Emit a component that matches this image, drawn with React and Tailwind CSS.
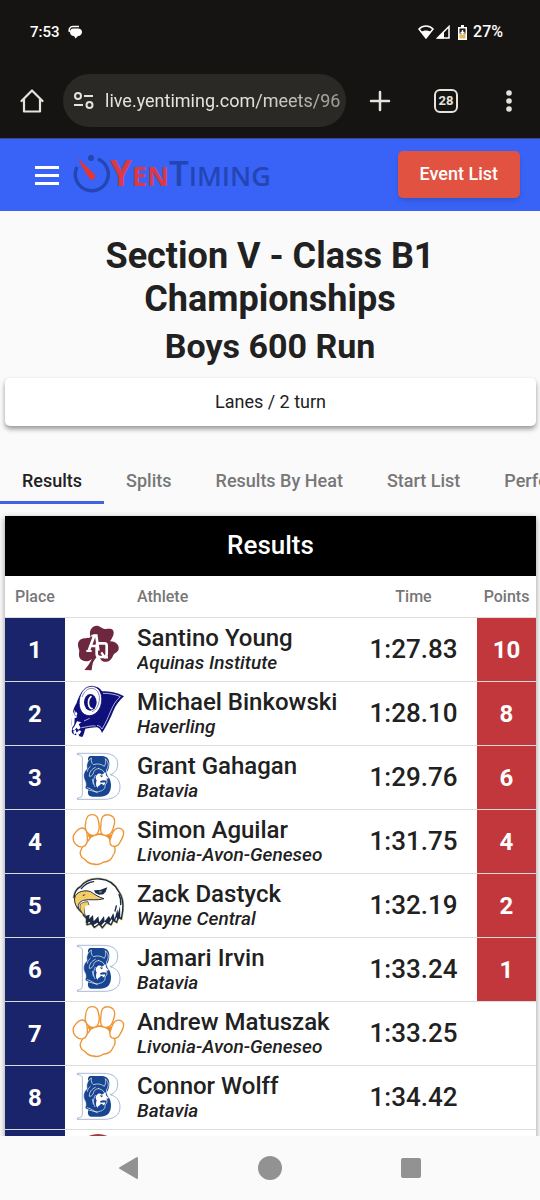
import React from "react";
import clsx from "clsx";

const tabs = ["Results", "Splits", "Results By Heat", "Start List", "Performance List"];

const results = [
  { place: 1, name: "Santino Young", school: "Aquinas Institute", time: "1:27.83", points: 10, logo: ShamrockLogo },
  { place: 2, name: "Michael Binkowski", school: "Haverling", time: "1:28.10", points: 8, logo: RamLogo },
  { place: 3, name: "Grant Gahagan", school: "Batavia", time: "1:29.76", points: 6, logo: DevilLogo },
  { place: 4, name: "Simon Aguilar", school: "Livonia-Avon-Geneseo", time: "1:31.75", points: 4, logo: PawLogo },
  { place: 5, name: "Zack Dastyck", school: "Wayne Central", time: "1:32.19", points: 2, logo: EagleLogo },
  { place: 6, name: "Jamari Irvin", school: "Batavia", time: "1:33.24", points: 1, logo: DevilLogo },
  { place: 7, name: "Andrew Matuszak", school: "Livonia-Avon-Geneseo", time: "1:33.25", logo: PawLogo },
  { place: 8, name: "Connor Wolff", school: "Batavia", time: "1:34.42", logo: DevilLogo },
  { place: 9, logo: CircleLogo },
];

function Logo({ viewBox, children }) {
  return (
    <svg viewBox={viewBox} className="mx-auto block size-14 overflow-visible" aria-hidden="true">
      {children}
    </svg>
  );
}

function ShamrockLogo() {
  return (
    <Logo viewBox="28 19 168 168">
      <path
        fill="#6d2840"
        d="M90 64C83 46 93 31 108 30c10 0 15 8 24 10 11 1 22-4 26 6 4 10-4 22-10 31 14-1 28 9 26 23-1 10-13 11-17 20-4 13-15 20-27 18-12-3-13-15-16-20-9 9-16 18-18 26-2 9-3 18-3 20l-22-1c9-9 16-21 23-33-8 6-19 10-29 4-13-7-10-20-9-29-3-10-8-22 1-31 9-10 27-4 33-10z"
      />
      <g fill="none" stroke="#fff" strokeWidth="8">
        <path d="M84 105l17-45h6l6 45M90 91h21" />
        <path d="M77 106h16M92 60h15" strokeWidth="6" />
        <path d="M113 83h19c4 0 6 3 6 7v24c0 6-4 10-10 10h-11c-6 0-9-4-9-10V92c0-5 2-9 5-9z" />
        <path d="M122 110l10 15h10" strokeWidth="7" />
      </g>
    </Logo>
  );
}

function RamLogo() {
  return (
    <Logo viewBox="0 7 168 168">
      <path
        fill="#10107c"
        d="M72 10c8-3 18 3 24 13 22 0 46 3 66 15-14 13-25 27-32 44-8 20-19 43-34 66-3-8-6-14-14-17-12-1-24 3-36 4-3 8-4 17-9 25l-9-2-3-8-8 5c-7-2-12-6-12-12 2-8 2-14 0-20-1-12 1-22 4-31-1-14 5-24 11-34 5-15 12-33 25-42z"
      />
      <path fill="none" stroke="#fff" strokeWidth="2" d="M99 29c18 0 36 2 52 10-27 22-31 59-55 97-3-6-8-10-15-11" />
      <path
        fill="#fff"
        stroke="#10107c"
        strokeWidth="2.500"
        d="M28 50C31 22 48 7 67 8c20 2 30 21 28 44-2 25-17 43-37 44-22 0-33-21-30-46z"
      />
      <path fill="none" stroke="#10107c" strokeWidth="1.500" d="M36 40c6-17 17-26 30-26 15 1 24 17 22 35-2 17-10 31-22 35" />
      <ellipse cx="61" cy="56" rx="19" ry="25" fill="#10107c" />
      <path fill="none" stroke="#fff" strokeWidth="5" strokeLinecap="round" d="M66 75c-12-3-15-26-3-36" />
      <path fill="none" stroke="#10107c" strokeWidth="2" d="M30 88c17 22 48 19 59-11" />
      <path fill="#fff" d="M6 97l9-20-2 17 9 6-8 4-1 18-6 10c-3-12-3-24-1-35zM21 113l13 3-8 6 6 11-8 5-4-6-8 9-5-4 7-10zM17 83l5 6-2 8-6-4z" />
      <path fill="#fff" d="M10 143l7-5 3 9 7-7 7 2-5 10-3-2-4 8-5-9-5 4z" />
      <path fill="none" stroke="#fff" strokeWidth="2" d="M34 132c16-2 30-7 43-5M42 112l17-8" />
    </Logo>
  );
}

function DevilLogo() {
  return (
    <Logo viewBox="0 4 168 168">
      <path
        fill="#fff"
        stroke="#7d95bf"
        strokeWidth="2"
        d="M22 14h77c29 0 44 12 44 32 0 18-9 28-23 32 19 4 30 18 30 36 0 25-18 38-48 38H22v-4c10-1 15-3 15-11V29c0-7-4-10-15-11z"
      />
      <path fill="#184592" d="M62 22h30c18 0 26 7 26 24 0 15-6 25-14 30 12 5 19 17 19 34 0 22-10 34-33 34H67c-10 0-14-6-13-15V33c0-7 2-11 8-11z" />
      <path
        fill="#184592"
        stroke="#fff"
        strokeWidth="2"
        strokeLinejoin="round"
        d="M51 60c-4-17 5-26 13-32-1 10 1 16 6 20 13-4 24-2 33 5 4-7 5-14 3-23 11 10 11 23 3 34 1 9 3 16 8 23l-8 3c4 9 1 14-4 19 2 9-5 16-13 18-9 4-19 3-27-1-8 0-15-4-20-8 3-7 4-14 0-21-7-13-5-28 6-37z"
      />
      <path fill="#fff" d="M84 76c4-3 9 0 11 2l12-7 1 9 7 8-7 2 2 6-12-1-8 3 2 4 14-1c-1 8-5 10-10 8-9-2-12 5-14 8-6-7-4-15-2-22-5-7-3-15 4-19z" />
      <path fill="#184592" d="M89 80l11 1-6 5zM94 97l15-1-6 5zM90 105l9 2-4 9z" />
      <g fill="none" stroke="#fff" strokeWidth="2" strokeLinecap="round">
        <path d="M61 53c-5 4-8 9-9 15M76 56c-11 5-19 15-18 27 8 1 12-7 14-15 3-5 8-8 13-8M85 59l13 6 6 8M76 80c-8 13-7 24-1 34M67 92l3 14M52 117c13 3 19 11 30 15" />
      </g>
    </Logo>
  );
}

function PawLogo() {
  return (
    <Logo viewBox="28 205 168 168">
      <g fill="#fff" stroke="#ee9433" strokeWidth="4" strokeLinejoin="round">
        <path fill="#ee9433" d="M82 268l32-3 39 4-10 14-26-16-25 16z" />
        <path d="M90 275c12-10 38-14 52-1 8 8 8 18 16 25 8 10 6 21-1 30-4 13-16 21-28 20-9 7-20 9-31 6-12 0-20-7-27-15-12-5-16-19-9-29 4-14 18-19 28-36z" />
        <path d="M82 211c13-8 27-4 30 9 4 14 5 32-1 42-5 10-18 9-27 2-11-8-12-20-9-32 0-9 3-15 7-21z" />
        <path d="M126 213c7-8 20-7 29-1 9 7 8 20 4 31-2 10-6 20-14 24-8 4-19 3-23-5-5-9-1-20-1-29 0-8 1-14 5-20z" />
        <path d="M64 247c13-1 16 16 16 30 1 13-3 23-13 26-10 3-20-4-26-12-6-11-4-22 3-30 5-7 11-13 20-14z" />
        <path d="M169 248c10-3 20 4 20 15-1 11-6 17-10 25-5 12-16 17-26 12-8-5-5-19-1-28 3-11 7-21 17-24z" />
      </g>
    </Logo>
  );
}

function EagleLogo() {
  return (
    <Logo viewBox="0 10 168 168">
      <path
        fill="#fff"
        stroke="#c9bd7c"
        strokeWidth="8"
        strokeLinejoin="round"
        d="M12 68C14 50 24 40 32 36c14-18 35-25 58-23 28 2 45 16 56 38 13 17 14 36 12 56l-4 26-9-8-5 18-10-8-7 15-13-7-13 16-9-12-15 11-8-12-14 4 2-16-12-12c-4-10-2-20 3-27-9 5-7 12-6 20-14-10-22-28-22-47z"
      />
      <path
        fill="#fff"
        stroke="#1c2a44"
        strokeWidth="4"
        strokeLinejoin="round"
        d="M12 68C14 50 24 40 32 36c14-18 35-25 58-23 28 2 45 16 56 38 13 17 14 36 12 56l-4 26-9-8-5 18-10-8-7 15-13-7-13 16-9-12-15 11-8-12-14 4 2-16-12-12c-4-10-2-20 3-27-9 5-7 12-6 20-14-10-22-28-22-47z"
      />
      <path
        fill="#f5cf65"
        stroke="#1c2a44"
        strokeWidth="3"
        strokeLinejoin="round"
        d="M62 51c-14-5-32-2-42 7-10 10-8 29 4 44 0-14 5-22 17-25 18-5 38 2 61-5-15-4-28-12-40-21z"
      />
      <path fill="#f5cf65" stroke="#1c2a44" strokeWidth="2" strokeLinejoin="round" d="M31 88c7-5 15-7 23-7l3 12c-8-1-13 4-13 14-1 6 0 11 3 16-13-7-20-20-16-35z" />
      <path fill="#fff" d="M46 94c4-3 9-4 12-3-2 9-1 19-8 28-5-7-8-17-4-25z" />
      <path fill="#1c2a44" d="M72 47l18-1 22-8-5 13-7 8-13 1-11-5zM37 61l10-2-6 5z" />
      <path fill="#5c86bf" d="M86 50l10-2-2 6-6 1z" />
      <path
        fill="#1c2a44"
        d="M48 123l11-3-2 13 12-12 2 19 14-15 3 18 14-19 2 16 13-17 4 9 9-17 4 18 8-29 2 12 6-22 1 36-7 5-5-7-5 14-10-8-7 13-13-6-13 14-9-11-15 9-8-11-12 4z"
      />
      <path fill="none" stroke="#1c2a44" strokeWidth="4" strokeLinecap="round" d="M34 42c9-12 22-19 37-21M147 60c5 9 6 20 5 30M139 94l-4 15" />
    </Logo>
  );
}

function CircleLogo() {
  return (
    <Logo viewBox="0 0 56 56">
      <circle cx="28" cy="23" r="23" fill="#a13940" />
      <circle cx="28" cy="23" r="16" fill="#fff" />
    </Logo>
  );
}

function StatusBar() {
  return (
    <div className="flex h-16 items-center justify-between pl-[30px] pr-[37px] text-[15px] font-medium text-white">
      <div className="flex items-center gap-2">
        <span>7:53</span>
        <svg viewBox="0 0 15 14" className="h-[14px] w-[15px]" fill="currentColor" aria-hidden="true">
          <path d="M5.500 3.500h4.500c2.500 0 4 1.500 4 3.500s-1.500 4-4 4L7.500 13.500 6 11C3.500 11 2 9.500 2 7s1.500-3.500 3.500-3.500z" />
          <path d="M1.500 7C.5 4 2 1.500 5 1.500h6" fill="none" stroke="currentColor" strokeWidth="1.500" />
        </svg>
      </div>
      <div className="flex items-center">
        <svg viewBox="0 0 16 14" className="h-[14px] w-4" aria-hidden="true">
          <path d="M1 4c4-4 10-4 14 0L8 13z" fill="none" stroke="#fff" strokeWidth="1.500" />
          <path d="M3 7c3-2 7-2 10 0l-5 6z" fill="#fff" />
        </svg>
        <svg viewBox="0 0 14 14" className="ml-0.5 h-[14px] w-[14px]" aria-hidden="true">
          <path d="M1.500 13L13 1.500V13z" fill="none" stroke="#fff" strokeWidth="1.500" />
          <path d="M1 13.500l7-7v7z" fill="#fff" />
        </svg>
        <svg viewBox="0 0 9 15" className="ml-2 h-[15px] w-[9px]" aria-hidden="true">
          <path d="M3 0h3v2h3v13H0V2h3z" fill="#fff" />
          <path d="M1.500 3.500h6v5h-6z" fill="#151412" />
          <path d="M1.500 9h6v4.500h-6z" fill="#e0bd5c" />
          <path d="M4.500 5v5M2.500 7.500h4" stroke="#fff" strokeWidth="1.400" />
        </svg>
        <span className="ml-1.5 text-base">27%</span>
      </div>
    </div>
  );
}

function BrowserBar() {
  return (
    <div className="flex h-[74px] items-center pb-px pl-5 pr-7 text-[#e6e2dc]">
      <button aria-label="Home" className="shrink-0">
        <svg viewBox="0 0 24 24" className="size-6" fill="none" stroke="currentColor" strokeWidth="2.200" strokeLinejoin="round" strokeLinecap="round" aria-hidden="true">
          <path d="M1.500 12L12 1.500 22.500 12M4 10v12.500h16V10" />
        </svg>
      </button>
      <div className="ml-[19px] flex h-[53px] min-w-0 flex-1 items-center gap-[11px] rounded-full bg-[#2a2926] pl-2.5 pr-1.5">
        <svg viewBox="0 0 21 18" className="h-[18px] w-[21px] shrink-0" fill="none" stroke="currentColor" strokeWidth="2" aria-hidden="true">
          <circle cx="5" cy="4" r="3" />
          <circle cx="16.500" cy="13" r="3" />
          <path d="M11 4h9M1 13h9" />
        </svg>
        <input
          aria-label="Address"
          className="w-full min-w-0 bg-transparent text-lg outline-none [mask-image:linear-gradient(to_right,black_60%,rgba(0,0,0,0.6))]"
          defaultValue="live.yentiming.com/meets/96"
        />
      </div>
      <button aria-label="New tab" className="ml-[23px] shrink-0">
        <svg viewBox="0 0 22 22" className="size-[22px]" fill="none" stroke="currentColor" strokeWidth="2.500" strokeLinecap="round" aria-hidden="true">
          <path d="M11 2v18M2 11h18" />
        </svg>
      </button>
      <button
        aria-label="28 open tabs"
        className="ml-[43px] flex size-6 shrink-0 items-center justify-center rounded-md border-2 border-current text-[13px] font-bold leading-none"
      >
        28
      </button>
      <button aria-label="Menu" className="ml-12 shrink-0">
        <svg viewBox="0 0 6 22" className="h-[22px] w-1.5" fill="currentColor" aria-hidden="true">
          <circle cx="3" cy="3" r="2.800" />
          <circle cx="3" cy="11" r="2.800" />
          <circle cx="3" cy="19" r="2.800" />
        </svg>
      </button>
    </div>
  );
}

function AppHeader() {
  return (
    <header className="flex h-[73px] shrink-0 items-center border-t border-[#3b4a86] bg-[#3863f6] pb-0.5 pl-[35px] pr-5">
      <button aria-label="Open menu" className="mt-0.5 flex w-6 flex-col gap-[5px]">
        <span className="h-[3px] w-full bg-white" />
        <span className="h-[3px] w-full bg-white" />
        <span className="h-[3px] w-full bg-white" />
      </button>
      <a href="#" className="ml-3.5 flex items-center">
        <svg viewBox="0 0 37 40" className="h-10 w-[37px]" aria-hidden="true">
          <path d="M4 13a16.500 16.500 0 1 0 21-8" fill="none" stroke="#2446b4" strokeWidth="3.500" />
          <circle cx="18" cy="4" r="3" fill="#2446b4" />
          <path d="M5 4l17 17c1 3-2 6-5 4C12 19 9 12 5 4z" fill="#e8352e" />
        </svg>
        <span className="pb-1 font-['Open_Sans',sans-serif] text-[27px] font-bold leading-none text-[#d93a45]">
          <span className="text-[35px]">Y</span>EN
        </span>
        <span className="pb-1 font-['Open_Sans',sans-serif] text-[27px] font-semibold leading-none text-[#2446b4]">
          <span className="text-[35px]">T</span>IMING
        </span>
      </a>
      <a
        href="#"
        className="ml-auto flex h-[47px] shrink-0 items-center rounded-[5px] bg-[#e25241] px-[22px] text-lg font-medium text-white shadow-md"
      >
        Event List
      </a>
    </header>
  );
}

function ResultRow({ place, name, school, time, points, logo: TeamLogo }) {
  return (
    <tr className="h-16">
      <td className="border-b border-[#dcdcdc] bg-[#1a246b] text-center text-2xl font-bold text-white">{place}</td>
      <td className="border-b border-[#dcdcdc]">
        <TeamLogo />
      </td>
      <td className="border-b border-[#dcdcdc] pl-[7px] pt-px">
        <div className="truncate text-2xl font-medium leading-[26px]">{name}</div>
        <div className="truncate text-[19px] font-medium italic leading-6">{school}</div>
      </td>
      <td className="border-b border-[#dcdcdc] text-center text-[26px] font-medium">{time}</td>
      <td className={clsx("border-b border-[#dcdcdc] text-center text-2xl font-bold text-white", points && "bg-[#c2373c]")}>
        {points}
      </td>
    </tr>
  );
}

function NavBar() {
  return (
    <nav className="flex h-16 shrink-0 items-center justify-center gap-[117px] bg-[#fafafa] text-[#929292]">
      <button aria-label="Back">
        <svg viewBox="0 0 24 24" className="size-6" fill="currentColor" stroke="currentColor" strokeWidth="2" strokeLinejoin="round" aria-hidden="true">
          <path d="M3 12l17-10v20z" />
        </svg>
      </button>
      <button aria-label="Home screen" className="size-6 rounded-full bg-current" />
      <button aria-label="Recent apps" className="flex size-6 items-center justify-center">
        <span className="size-5 rounded-[2px] bg-current" />
      </button>
    </nav>
  );
}

export default function App() {
  return (
    <div className="flex h-screen flex-col overflow-hidden bg-[#fafafa] font-['Roboto',sans-serif] text-[#212121]">
      <div className="shrink-0 bg-[#151412]">
        <StatusBar />
        <BrowserBar />
      </div>
      <AppHeader />
      <main className="min-h-0 flex-1 overflow-hidden">
        <h1 className="mx-auto mt-6 max-w-[400px] text-center text-[36px] font-bold leading-[43px]">
          Section V - Class B1 Championships
        </h1>
        <h2 className="text-center text-[34px] font-bold leading-[50px]">Boys 600 Run</h2>
        <div className="ml-[5px] mr-1 mt-[7px] flex h-12 items-center justify-center rounded-[5px] bg-white text-lg shadow-[0_3px_5px_rgba(0,0,0,0.4)]">
          Lanes / 2 turn
        </div>
        <div role="tablist" className="mt-8 flex h-[46px] overflow-hidden">
          {tabs.map((tab, i) => (
            <button
              key={tab}
              role="tab"
              aria-selected={i === 0}
              className={clsx(
                "shrink-0 whitespace-nowrap border-b-[3px] px-[22px] pt-0.5 text-lg font-medium",
                i === 0 ? "border-[#3f64e0]" : "border-transparent text-[#777]"
              )}
            >
              {tab}
            </button>
          ))}
        </div>
        <section className="ml-[5px] mr-1 mt-3 bg-white shadow-[0_2px_6px_rgba(0,0,0,0.4)]">
          <h3 className="flex h-[60px] items-center justify-center bg-black pb-0.5 text-[26px] font-medium text-white">Results</h3>
          <table className="w-full table-fixed border-separate border-spacing-0">
            <thead>
              <tr className="h-[42px] text-base text-[#777]">
                <th className="w-[60px] border-b border-[#dcdcdc] font-medium">Place</th>
                <th className="w-[65px] border-b border-[#dcdcdc]" aria-label="Team" />
                <th className="border-b border-[#dcdcdc] pl-[7px] text-left font-medium">Athlete</th>
                <th className="w-[127px] border-b border-[#dcdcdc] font-medium">Time</th>
                <th className="w-[59px] border-b border-[#dcdcdc] font-medium">Points</th>
              </tr>
            </thead>
            <tbody>
              {results.map((result) => (
                <ResultRow key={result.place} {...result} />
              ))}
            </tbody>
          </table>
        </section>
      </main>
      <NavBar />
    </div>
  );
}
